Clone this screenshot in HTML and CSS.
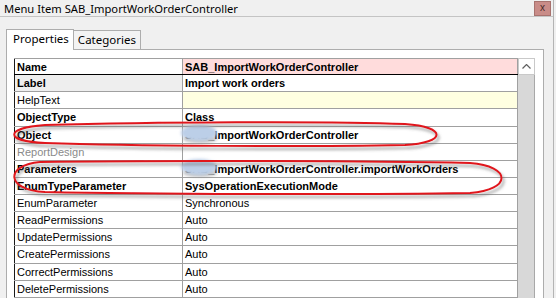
FILE: index.html
```html
<!DOCTYPE html>
<html lang="en">
<head>
  <meta charset="UTF-8">
  <title>Menu Item SAB_ImportWorkOrderController</title>
  <link rel="stylesheet" href="styles.css">
</head>
<body>

<div class="window">
  <div class="titlebar">
    <span class="title">Menu Item SAB_ImportWorkOrderController</span>
    <span class="close">x</span>
  </div>

  <div class="content">
    <div class="tabs">
      <div class="tab active">Properties</div>
      <div class="tab">Categories</div>
    </div>

    <div class="panel">
      <div class="grid-wrap">
        <!-- Property grid -->
        <table class="props">
          <tr class="head-row">
            <td class="bold">Name</td>
            <td class="bold pink">SAB_ImportWorkOrderController</td>
          </tr>
          <tr>
            <td class="bold shaded">Label</td>
            <td class="bold">Import work orders</td>
          </tr>
          <tr>
            <td>HelpText</td>
            <td class="yellow"></td>
          </tr>
          <tr>
            <td class="bold">ObjectType</td>
            <td class="bold">Class</td>
          </tr>
          <tr>
            <td class="bold">Object</td>
            <td class="bold">SAB_ImportWorkOrderController</td>
          </tr>
          <tr>
            <td class="disabled">ReportDesign</td>
            <td></td>
          </tr>
          <tr>
            <td class="bold">Parameters</td>
            <td class="bold">SAB_ImportWorkOrderController.importWorkOrders</td>
          </tr>
          <tr>
            <td class="bold">EnumTypeParameter</td>
            <td class="bold">SysOperationExecutionMode</td>
          </tr>
          <tr>
            <td>EnumParameter</td>
            <td>Synchronous</td>
          </tr>
          <tr>
            <td>ReadPermissions</td>
            <td>Auto</td>
          </tr>
          <tr>
            <td>UpdatePermissions</td>
            <td>Auto</td>
          </tr>
          <tr>
            <td>CreatePermissions</td>
            <td>Auto</td>
          </tr>
          <tr>
            <td>CorrectPermissions</td>
            <td>Auto</td>
          </tr>
          <tr>
            <td>DeletePermissions</td>
            <td>Auto</td>
          </tr>
          <tr>
            <td></td>
            <td></td>
          </tr>
        </table>

        <div class="scrollbar">
          <div class="scroll-up">
            <svg width="9" height="5" viewBox="0 0 9 5"><polyline points="0.5,4.5 4.5,0.5 8.5,4.5" fill="none" stroke="#606060" stroke-width="1.2"/></svg>
          </div>
          <div class="scroll-track"></div>
        </div>
      </div>
    </div>
  </div>

  <!-- Annotations drawn over the screenshot -->
  <svg class="marks" width="556" height="298" viewBox="0 0 556 298">
    <defs>
      <filter id="shadow" x="-10%" y="-50%" width="120%" height="200%">
        <feDropShadow dx="2" dy="3" stdDeviation="1.5" flood-color="#606060" flood-opacity="0.6"/>
      </filter>
      <filter id="soft" x="-50%" y="-50%" width="200%" height="200%">
        <feGaussianBlur stdDeviation="1.4"/>
      </filter>
    </defs>

    <ellipse cx="200" cy="139" rx="17" ry="4" fill="#8a8a8a" opacity="0.5" filter="url(#soft)"/>
    <ellipse cx="199" cy="133" rx="18" ry="8" fill="#bccfe8" filter="url(#soft)"/>
    <ellipse cx="200" cy="173" rx="17" ry="4" fill="#8a8a8a" opacity="0.5" filter="url(#soft)"/>
    <ellipse cx="199" cy="167" rx="18" ry="8" fill="#bccfe8" filter="url(#soft)"/>

    <path d="M 45 125 C 150 122, 330 121, 405 124 C 448 127, 446 143, 405 145 C 300 147, 130 146, 45 143 C 4 141, 4 128, 45 125 Z"
          fill="none" stroke="#e0161e" stroke-width="2" filter="url(#shadow)"/>
    <path d="M 40 162 C 170 160, 380 161, 470 163 C 512 166, 512 190, 470 193 C 350 195, 140 194, 45 192 C 5 190, 5 165, 40 162 Z"
          fill="none" stroke="#e0161e" stroke-width="2" filter="url(#shadow)"/>
  </svg>
</div>

</body>
</html>
```

FILE: styles.css
```css
/* General Styling */
body {
  margin: 0;
  background-color: #f0f0f0;
  font-family: "Liberation Sans", Arial, sans-serif;
  overflow: hidden;
}

.window {
  position: relative;
  width: 553px;
  height: 298px;
  border-right: 1px solid #b4b4b4;
  overflow: hidden;
}

.titlebar {
  display: flex;
  justify-content: space-between;
  align-items: center;
  height: 16px;
  border-bottom: 1px solid #c4c4c4;
  padding: 0 2px 0 4px;
}

.title {
  font-family: "Noto Sans", sans-serif;
  font-size: 11.2px;
  color: #000000;
}

.close {
  width: 15px;
  height: 13px;
  background-color: #c98c88;
  border: 1px solid #a8726e;
  color: #4a2a28;
  font-size: 10px;
  line-height: 12px;
  text-align: center;
}

.content {
  width: 538px;
  padding: 11px 0 0 6px;
}

/* Tabs */
.tabs {
  display: flex;
  align-items: flex-end;
  height: 21px;
}

.tab {
  font-family: "Noto Sans", sans-serif;
  font-size: 11.5px;
  height: 18px;
  padding: 0 4px;
  border: 1px solid #adadad;
  border-bottom: none;
  background-color: #f3f3f3;
  line-height: 18px;
}

.tab.active {
  height: 20px;
  padding: 0 4px 0 6px;
  background-color: #ffffff;
  position: relative;
  top: 1px;
  z-index: 1;
}

.tab + .tab {
  margin-left: -1px;
}

.panel {
  border: 1px solid #adadad;
  background-color: #ffffff;
  padding: 8px 8px 0 7px;
  height: 260px;
}

.grid-wrap {
  display: flex;
}

/* Property grid */
.props {
  width: 504px;
  border-collapse: collapse;
  border-top: 1px solid #000000;
  border-left: 1px solid #1a1a1a;
  font-size: 11px;
  table-layout: fixed;
}

.props td {
  height: 16px;
  padding: 0 2px;
  border: 1px solid #a0a0a0;
  border-left: none;
  white-space: nowrap;
  overflow: hidden;
  color: #000000;
}

.props td:first-child {
  width: 163px;
}

.props tr.head-row td {
  height: 15px;
  border-bottom: 1px solid #000000;
}

.props .bold {
  font-weight: bold;
}

.props .pink {
  background-color: #ffdcdc;
}

.props .yellow {
  background-color: #ffffe1;
}

.props .shaded {
  background-color: #eeeeee;
}

.props .disabled {
  color: #8a8a8a;
}

/* Scrollbar */
.scrollbar {
  width: 17px;
  display: flex;
  flex-direction: column;
}

.scroll-up {
  height: 15px;
  border: 1px solid #c9c9c9;
  background-color: #ffffff;
  display: flex;
  align-items: center;
  justify-content: center;
}

.scroll-track {
  height: 240px;
  background-color: #d8d8d8;
  border-right: 1px solid #a8a8a8;
}

/* Annotation overlay */
.marks {
  position: absolute;
  left: 0;
  top: 0;
  pointer-events: none;
}
```
